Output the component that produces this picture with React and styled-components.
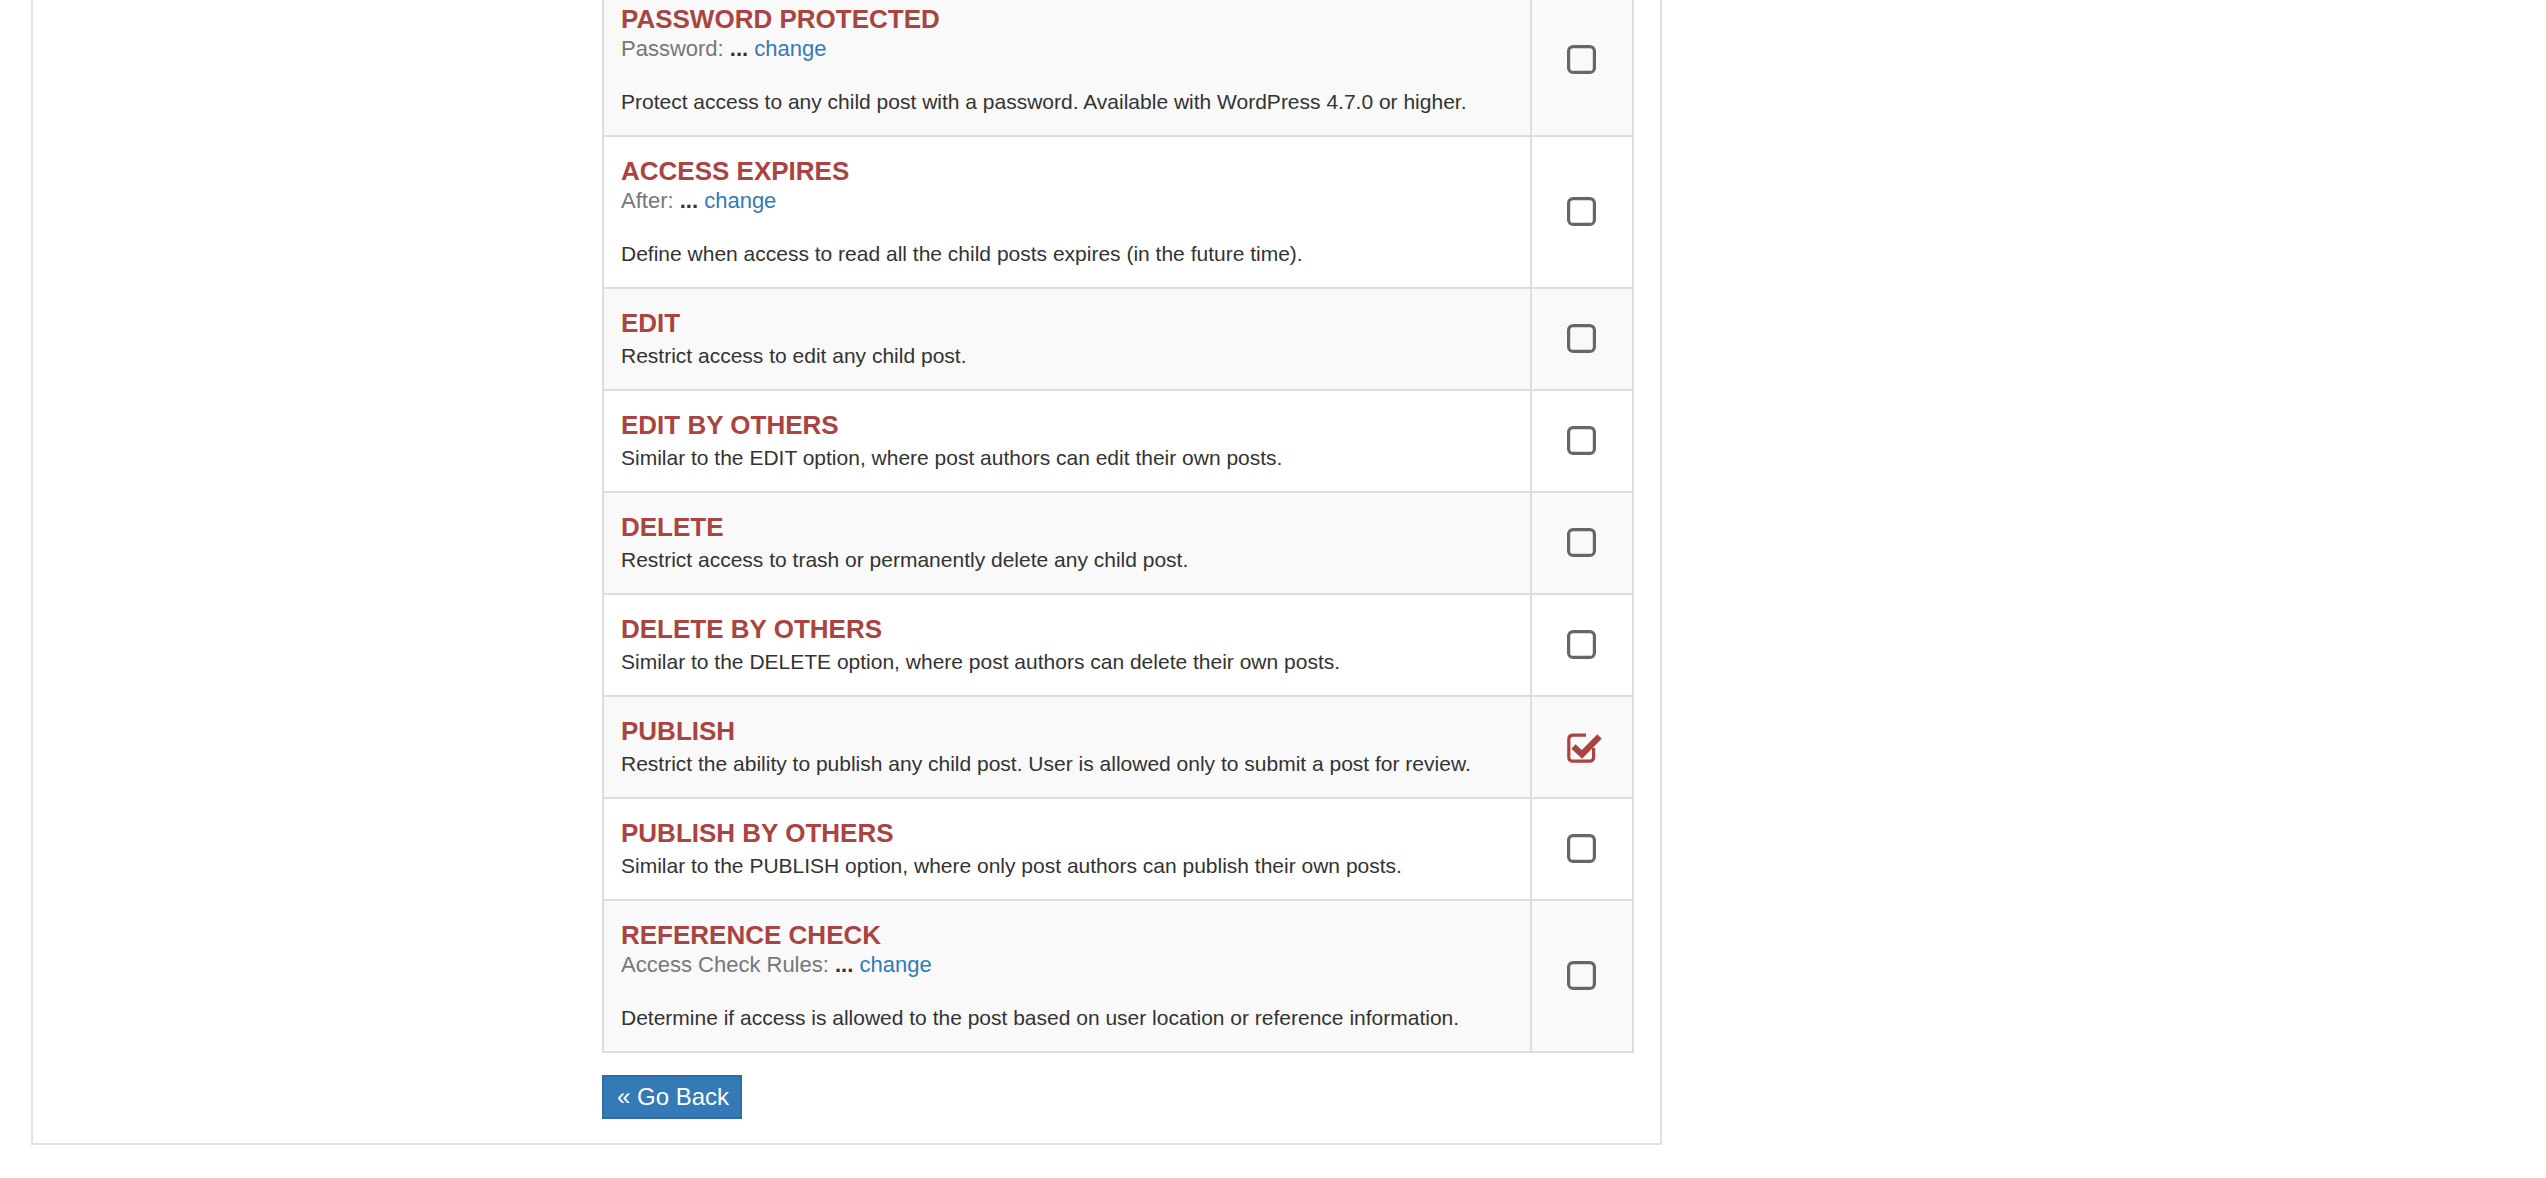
import React from 'react';
import styled, { createGlobalStyle } from 'styled-components';

const GlobalStyle = createGlobalStyle`
  body {
    margin: 0;
    background: #fff;
    font-family: "Liberation Sans", Helvetica, Arial, sans-serif;
    color: #333;
  }
`;

const Page = styled.div`
  padding-left: 31px;
  height: 1178px;
  overflow: hidden;
`;

const Panel = styled.section`
  box-sizing: border-box;
  width: 1631px;
  margin-top: -40px;
  border: 2px solid #e1e1e1;
  display: flex;
  padding: 21px 26px 24px 0;
`;

const Aside = styled.div`
  flex: 0 0 569px;
`;

const Content = styled.div`
  flex: 1;
`;

const Table = styled.table`
  width: 100%;
  border-collapse: collapse;
  border: 2px solid #ddd;
`;

const Row = styled.tr`
  background: ${({ $striped }) => ($striped ? '#f9f9f9' : '#fff')};
`;

const InfoCell = styled.td`
  border: 2px solid #ddd;
  padding: 19px 18px 18px 17px;
  vertical-align: top;
`;

const CheckCell = styled.td`
  border: 2px solid #ddd;
  width: 100px;
  text-align: center;
  vertical-align: middle;
  padding: 0;
`;

const Title = styled.div`
  font-size: 26px;
  line-height: 30px;
  font-weight: bold;
  color: #a94442;
  margin-bottom: 3px;
`;

const Meta = styled.div`
  font-size: 22px;
  line-height: 24px;
  color: #777;
  margin-bottom: 26px;

  b {
    color: #333;
  }

  a {
    color: #337ab7;
    text-decoration: none;
  }
`;

const Description = styled.div`
  font-size: 21px;
  line-height: 30px;
  color: #333;
`;

const BackButton = styled.button`
  margin-top: 22px;
  height: 44px;
  padding: 0 11px 0 13px;
  background: #337ab7;
  border: 2px solid #2e6da4;
  border-radius: 0;
  color: #fff;
  font-family: inherit;
  font-size: 24px;
  cursor: pointer;
`;

const IconBox = styled.svg`
  display: inline-block;
  vertical-align: middle;
`;

const Unchecked = () => (
  <IconBox width="30" height="30" viewBox="0 0 30 30">
    <rect x="1.6" y="1.6" width="25.8" height="25.8" rx="4.5" fill="none" stroke="#666" strokeWidth="3.2" />
  </IconBox>
);

const Checked = () => (
  <IconBox width="36" height="32" viewBox="0 0 36 32" style={{ marginLeft: 6 }}>
    <path
      d="M26.6 17 V26 Q26.6 30.2 22.4 30.2 H6 Q1.8 30.2 1.8 26 V8.4 Q1.8 4.2 6 4.2 H19"
      fill="none"
      stroke="#a94442"
      strokeWidth="3.2"
    />
    <path d="M6.5 15.5 L15 23.5 L32.5 5.5" fill="none" stroke="#a94442" strokeWidth="6.2" />
  </IconBox>
);

const rules = [
  {
    title: 'PASSWORD PROTECTED',
    meta: 'Password:',
    description: 'Protect access to any child post with a password. Available with WordPress 4.7.0 or higher.',
  },
  {
    title: 'ACCESS EXPIRES',
    meta: 'After:',
    description: 'Define when access to read all the child posts expires (in the future time).',
  },
  { title: 'EDIT', description: 'Restrict access to edit any child post.' },
  {
    title: 'EDIT BY OTHERS',
    description: 'Similar to the EDIT option, where post authors can edit their own posts.',
  },
  { title: 'DELETE', description: 'Restrict access to trash or permanently delete any child post.' },
  {
    title: 'DELETE BY OTHERS',
    description: 'Similar to the DELETE option, where post authors can delete their own posts.',
  },
  {
    title: 'PUBLISH',
    description: 'Restrict the ability to publish any child post. User is allowed only to submit a post for review.',
    checked: true,
  },
  {
    title: 'PUBLISH BY OTHERS',
    description: 'Similar to the PUBLISH option, where only post authors can publish their own posts.',
  },
  {
    title: 'REFERENCE CHECK',
    meta: 'Access Check Rules:',
    description: 'Determine if access is allowed to the post based on user location or reference information.',
  },
];

const App = () => (
  <>
    <GlobalStyle />
    <Page>
      <Panel>
        <Aside />
        <Content>
          <Table>
            <tbody>
              {rules.map((rule, index) => (
                <Row key={rule.title} $striped={index % 2 === 0}>
                  <InfoCell>
                    <Title>{rule.title}</Title>
                    {rule.meta && (
                      <Meta>
                        {rule.meta} <b>...</b> <a href="#">change</a>
                      </Meta>
                    )}
                    <Description>{rule.description}</Description>
                  </InfoCell>
                  <CheckCell>{rule.checked ? <Checked /> : <Unchecked />}</CheckCell>
                </Row>
              ))}
            </tbody>
          </Table>
          <BackButton>« Go Back</BackButton>
        </Content>
      </Panel>
    </Page>
  </>
);

export default App;
